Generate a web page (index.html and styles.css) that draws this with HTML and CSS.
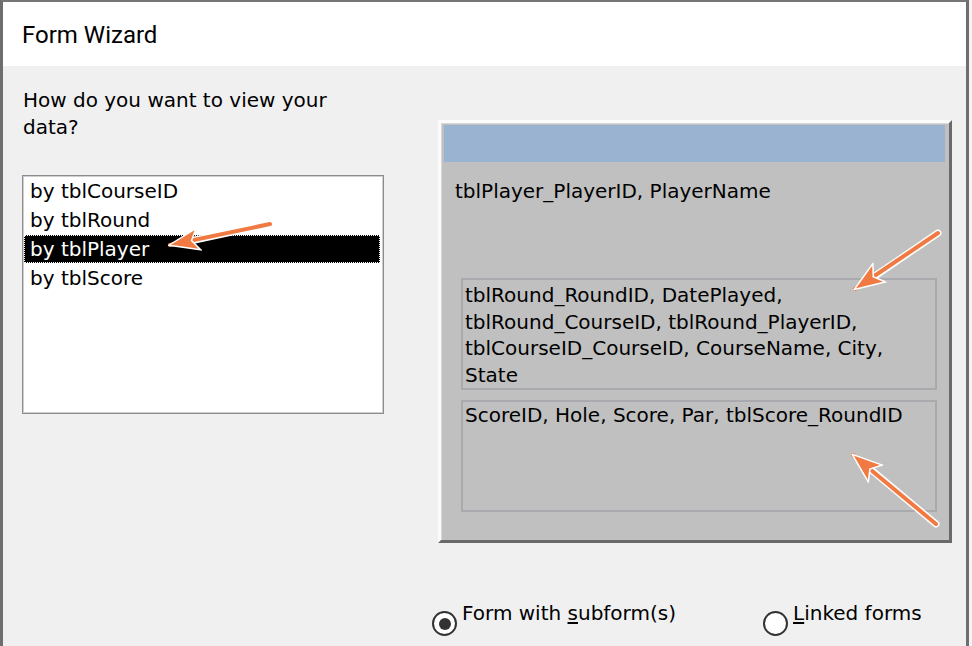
FILE: index.html
```html
<!DOCTYPE html>
<html>
<head>
<meta charset="utf-8">
<title>Form Wizard</title>
<link rel="stylesheet" href="styles.css">
</head>
<body>
<div class="frame">
  <header class="titlebar">Form Wizard</header>
  <div class="body">
    <div class="main">
      <div class="left">
        <p class="question">How do you want to view your<br>data?</p>
        <ul class="listbox">
          <li class="item">by tblCourseID</li>
          <li class="item">by tblRound</li>
          <li class="item selected">by tblPlayer</li>
          <li class="item">by tblScore</li>
        </ul>
      </div>
      <div class="panel">
        <div class="panel-head"></div>
        <div class="panel-main">tblPlayer_PlayerID, PlayerName</div>
        <div class="subbox first">tblRound_RoundID, DatePlayed,<br>tblRound_CourseID, tblRound_PlayerID,<br>tblCourseID_CourseID, CourseName, City,<br>State</div>
        <div class="subbox second">ScoreID, Hole, Score, Par, tblScore_RoundID</div>
      </div>
    </div>
    <div class="radios">
      <label class="radio"><span class="dot checked"></span><span class="rlabel">Form with <u>s</u>ubform(s)</span></label>
      <label class="radio"><span class="dot"></span><span class="rlabel"><u>L</u>inked forms</span></label>
    </div>
  </div>
  <svg class="arrows" width="972" height="646" viewBox="0 0 972 646">
    <defs>
      <marker id="head" viewBox="0 0 32 26" refX="30" refY="13" markerWidth="32" markerHeight="26" markerUnits="userSpaceOnUse" orient="auto">
        <path d="M1,2 L31,13 L1,24 L8,13 Z" fill="#f07a42" stroke="#ffffff" stroke-width="1.5" stroke-linejoin="miter"/>
      </marker>
    </defs>
    <g stroke-linecap="round">
      <line x1="270" y1="224" x2="190" y2="241" stroke="#ffffff" stroke-width="7"/>
      <line x1="270" y1="224" x2="170" y2="245" stroke="#f07a42" stroke-width="4" marker-end="url(#head)"/>
      <line x1="938" y1="233" x2="872" y2="278" stroke="#ffffff" stroke-width="7"/>
      <line x1="938" y1="233" x2="855" y2="289" stroke="#f07a42" stroke-width="4" marker-end="url(#head)"/>
      <line x1="936" y1="524" x2="869" y2="468" stroke="#ffffff" stroke-width="7"/>
      <line x1="936" y1="524" x2="853" y2="455" stroke="#f07a42" stroke-width="4" marker-end="url(#head)"/>
    </g>
  </svg>
</div>
</body>
</html>
```

FILE: styles.css
```css
* { box-sizing: border-box; }
html, body { margin: 0; padding: 0; }
body {
  background: #f4f4f4;
  width: 972px;
  height: 646px;
  overflow: hidden;
  font-family: "DejaVu Sans", sans-serif;
  font-size: 20px;
  color: #000;
}
.frame {
  position: relative;
  width: 969px;
  height: 646px;
  border-left: 3px solid #6e6e6e;
  border-right: 3px solid #6e6e6e;
  border-top: 2px solid #767676;
  background: #f0f0f0;
  display: flex;
  flex-direction: column;
}
.titlebar {
  height: 64px;
  background: #ffffff;
  font-family: Roboto, "Liberation Sans", sans-serif;
  font-size: 24px;
  line-height: 24px;
  padding: 21px 0 0 19px;
  color: #000;
}
.body {
  flex: 1;
  background: #f0f0f0;
}
.main {
  display: grid;
  grid-template-columns: 362px 514px;
  column-gap: 54px;
  padding: 21px 0 0 19px;
  align-items: start;
}
.question {
  margin: 0 0 34px 1px;
  line-height: 27px;
}
.listbox {
  list-style: none;
  margin: 0;
  padding: 1px;
  height: 239px;
  background: #fff;
  border: 1px solid #8c8c8c;
  box-shadow: inset 0 0 0 1px #cfcfcf;
}
.item {
  height: 29px;
  line-height: 29px;
  padding-left: 6px;
  margin-right: 2px;
  white-space: nowrap;
}
.item.selected {
  background: #000;
  color: #fff;
  height: 28px;
  line-height: 28px;
  margin-bottom: 1px;
  outline: 1px dotted #ffffff;
  outline-offset: -1px;
}
.panel {
  margin-top: 33px;
  height: 423px;
  background: #c0c0c0;
  border-style: solid;
  border-width: 3px;
  border-color: #fbfbfb #6a6a6a #6a6a6a #fbfbfb;
  box-shadow: inset 1px 1px 0 #d8d8d8;
  padding: 2px 4px 0 3px;
}
.panel-head {
  height: 37px;
  background: #9ab3d0;
}
.panel-main {
  margin-top: 16px;
  padding-left: 11px;
  line-height: 27px;
  white-space: nowrap;
}
.subbox {
  margin-left: 17px;
  width: 476px;
  height: 112px;
  border: 2px solid #a9a9ae;
  padding: 2px 0 0 2px;
  line-height: 26.5px;
  white-space: nowrap;
}
.subbox.first { margin-top: 73px; }
.subbox.second { margin-top: 10px; padding-top: 0; }
.radios {
  display: grid;
  grid-template-columns: 331px auto;
  padding-left: 429px;
  margin-top: 57px;
}
.radio {
  display: flex;
  align-items: flex-start;
  line-height: 27px;
}
.dot {
  width: 25px;
  height: 25px;
  margin-top: 11px;
  border-radius: 50%;
  border: 2px solid #333;
  background: #fff;
  position: relative;
  flex: none;
}
.dot.checked::after {
  content: "";
  position: absolute;
  left: 4.5px;
  top: 4.5px;
  width: 12px;
  height: 12px;
  border-radius: 50%;
  background: #333;
}
.rlabel {
  margin-left: 5px;
  white-space: nowrap;
}
.rlabel u { text-underline-offset: 2px; }
.arrows {
  position: absolute;
  left: -3px;
  top: -2px;
  pointer-events: none;
}
```
